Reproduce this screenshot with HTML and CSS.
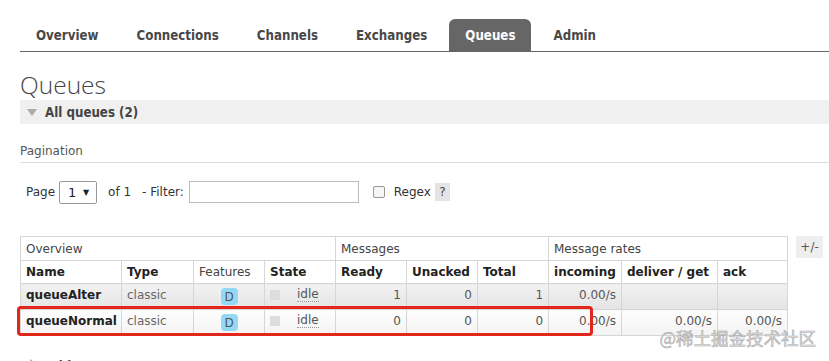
FILE: index.html
```html
<!DOCTYPE html>
<html lang="en">
<head>
    <meta charset="UTF-8">
    <meta name="viewport" content="width=device-width, initial-scale=1.0">
    <title>Queues</title>
    <link rel="stylesheet" href="styles.css">
</head>
<body>

    <ul class="tabs">
        <li><a href="#">Overview</a></li>
        <li><a href="#">Connections</a></li>
        <li><a href="#">Channels</a></li>
        <li><a href="#">Exchanges</a></li>
        <li class="active"><a href="#">Queues</a></li>
        <li><a href="#">Admin</a></li>
    </ul>

    <h1>Queues</h1>

    <div class="section-head"><span class="tri-down"></span>All queues (2)</div>

    <h3 class="pagination">Pagination</h3>

    <div class="filter-row">
        <span>Page</span>
        <div class="select"><span>1</span><span class="arrow">▼</span></div>
        <span class="of">of 1</span>
        <span>- Filter:</span>
        <input type="text" class="filter">
        <span class="check"></span>
        <span class="regex">Regex</span>
        <span class="help">?</span>
    </div>

    <div class="table-row">
        <div class="table-wrap">
            <table>
                <colgroup>
                    <col style="width: 101px">
                    <col style="width: 72px">
                    <col style="width: 71px">
                    <col style="width: 71px">
                    <col style="width: 71px">
                    <col style="width: 71px">
                    <col style="width: 71px">
                    <col style="width: 73px">
                    <col style="width: 96px">
                    <col style="width: 70px">
                </colgroup>
                <thead>
                    <tr class="group">
                        <th colspan="4">Overview</th>
                        <th colspan="3">Messages</th>
                        <th colspan="3">Message rates</th>
                    </tr>
                    <tr class="cols">
                        <th>Name</th>
                        <th>Type</th>
                        <th class="plain">Features</th>
                        <th>State</th>
                        <th>Ready</th>
                        <th>Unacked</th>
                        <th>Total</th>
                        <th>incoming</th>
                        <th>deliver / get</th>
                        <th>ack</th>
                    </tr>
                </thead>
                <tbody>
                    <tr class="alt1">
                        <td class="name">queueAlter</td>
                        <td class="type">classic</td>
                        <td class="center"><span class="badge">D</span></td>
                        <td><span class="state"><span class="dot"></span><span class="idle">idle</span></span></td>
                        <td class="num">1</td>
                        <td class="num">0</td>
                        <td class="num">1</td>
                        <td class="num">0.00/s</td>
                        <td></td>
                        <td></td>
                    </tr>
                    <tr class="alt2">
                        <td class="name">queueNormal</td>
                        <td class="type">classic</td>
                        <td class="center"><span class="badge">D</span></td>
                        <td><span class="state"><span class="dot"></span><span class="idle">idle</span></span></td>
                        <td class="num">0</td>
                        <td class="num">0</td>
                        <td class="num">0</td>
                        <td class="num">0.00/s</td>
                        <td class="num">0.00/s</td>
                        <td class="num">0.00/s</td>
                    </tr>
                </tbody>
            </table>
            <div class="highlight"></div>
        </div>
        <span class="toggle">+/-</span>
    </div>

    <div class="section-head closed"><span class="tri-right"></span>Add a new queue</div>

    <div class="watermark">@稀土掘金技术社区</div>

</body>
</html>
```

FILE: styles.css
```css
* {
    box-sizing: border-box;
    margin: 0;
    padding: 0;
}
body {
    font-family: "DejaVu Sans", Verdana, sans-serif;
    font-size: 12px;
    color: #444;
    background: #fff;
    padding-left: 20px;
    overflow: hidden;
    height: 361px;
}
.tabs {
    list-style: none;
    display: flex;
    margin-top: 19px;
    height: 33px;
    border-bottom: 1px solid #666;
}
.tabs li {
    margin-right: 6px;
}
.tabs a {
    display: block;
    padding: 1px 16px 0;
    line-height: 31px;
    font-family: "DejaVu Sans Condensed", "DejaVu Sans", sans-serif;
    font-stretch: condensed;
    font-weight: bold;
    font-size: 13.2px;
    color: #484848;
    text-decoration: none;
    border-radius: 6px 6px 0 0;
}
.tabs li.active a {
    background: #666;
    color: #fff;
}
h1 {
    margin-top: 18px;
    font-family: "Open Sans", sans-serif;
    font-weight: 300;
    font-size: 24.5px;
    line-height: 30px;
    color: #444;
}
.section-head {
    display: flex;
    align-items: center;
    height: 24px;
    background: #f0f0f0;
    font-family: "DejaVu Sans Condensed", "DejaVu Sans", sans-serif;
    font-stretch: condensed;
    font-weight: bold;
    font-size: 13.2px;
    color: #444;
    padding-left: 7px;
}
.tri-down {
    width: 0;
    height: 0;
    border-left: 5px solid transparent;
    border-right: 5px solid transparent;
    border-top: 7px solid #aaa;
    margin-right: 8px;
}
.tri-right {
    width: 0;
    height: 0;
    border-top: 5px solid transparent;
    border-bottom: 5px solid transparent;
    border-left: 7px solid #aaa;
    margin: 0 8px 0 3px;
}
.section-head.closed {
    background: none;
    margin-top: 20px;
    align-items: flex-start;
    padding-top: 3px;
}
.pagination {
    margin-top: 19px;
    font-weight: normal;
    font-size: 12px;
    line-height: 16px;
    padding-bottom: 3px;
    color: #555;
    border-bottom: 1px solid #ddd;
}
.filter-row {
    display: flex;
    align-items: center;
    margin-top: 18px;
    height: 22px;
    padding-left: 6px;
    color: #333;
}
.select {
    display: flex;
    align-items: center;
    justify-content: space-between;
    width: 38px;
    height: 23px;
    margin-left: 4px;
    padding: 0 7px 0 8px;
    border: 1px solid #999;
    border-radius: 2px;
    font-size: 13px;
    color: #222;
}
.select .arrow {
    font-size: 8px;
}
.of {
    margin: 0 11px 0 11px;
}
.filter {
    width: 170px;
    height: 22px;
    margin-left: 5px;
    border: 1px solid #bbb;
}
.check {
    width: 12px;
    height: 12px;
    margin-left: 14px;
    border: 1px solid #999;
    border-radius: 2px;
    background: #f6f6f6;
}
.regex {
    margin-left: 9px;
}
.help {
    margin-left: 4px;
    width: 15px;
    height: 18px;
    line-height: 18px;
    text-align: center;
    background: #e4e4e4;
    color: #444;
}
.table-row {
    display: flex;
    align-items: flex-start;
    margin-top: 33px;
}
.table-wrap {
    position: relative;
}
table {
    border-collapse: collapse;
    table-layout: fixed;
    width: 767px;
}
th, td {
    border: 1px solid #d6d6d6;
    padding: 0 5px;
    text-align: left;
    white-space: nowrap;
    overflow: hidden;
}
tr.group th {
    height: 24px;
    font-weight: normal;
    color: #444;
}
tr.cols th {
    height: 23px;
    font-weight: bold;
    color: #222;
}
tr.cols th.plain {
    font-weight: normal;
    color: #444;
}
td {
    height: 26px;
    color: #555;
    padding-bottom: 3px;
}
tr.alt1 td {
    background: linear-gradient(#f2f2f2, #e4e4e4);
}
tr.alt2 td {
    background: linear-gradient(#fdfdfd, #f3f3f3);
}
td.name {
    font-weight: bold;
    color: #222;
}
td.type {
    color: #666;
}
td.num {
    text-align: right;
}
td.center {
    text-align: center;
    padding-bottom: 0;
}
.badge {
    display: inline-block;
    width: 17px;
    height: 17px;
    line-height: 18px;
    border-radius: 4px;
    background: #93d8f5;
    color: #555;
    text-align: center;
    vertical-align: middle;
}
.state {
    display: flex;
    align-items: center;
}
.dot {
    width: 10px;
    height: 10px;
    background: #ddd;
    margin-right: 17px;
}
.idle {
    border-bottom: 1px dotted #999;
    line-height: 13px;
    color: #555;
}
.highlight {
    position: absolute;
    left: -3px;
    top: 70px;
    width: 576px;
    height: 30px;
    border: 3px solid #e3261c;
    border-radius: 4px;
}
.toggle {
    margin-left: 8px;
    width: 27px;
    height: 22px;
    line-height: 22px;
    text-align: center;
    background: #eee;
    color: #555;
}
.watermark {
    position: absolute;
    top: 327px;
    right: 13px;
    font-family: "Noto Sans CJK SC", sans-serif;
    font-size: 17.5px;
    line-height: 22px;
    color: rgba(225, 225, 225, 0.85);
    -webkit-text-stroke: 0.6px #aaa;
}
```
